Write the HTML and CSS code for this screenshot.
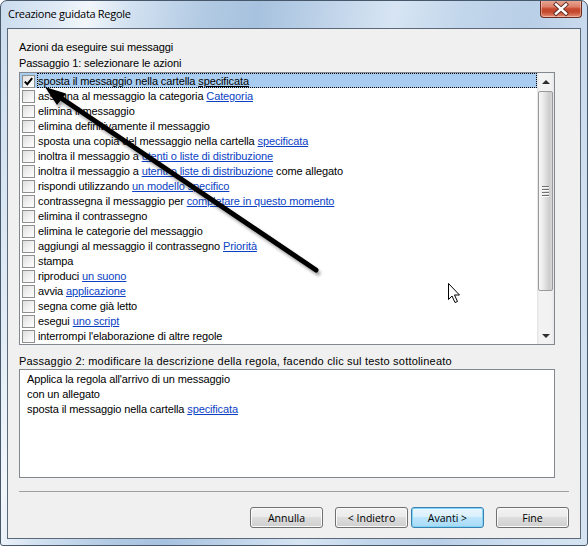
FILE: index.html
```html
<!DOCTYPE html>
<html lang="it">
<head>
<meta charset="utf-8">
<title>Creazione guidata Regole</title>
<link rel="stylesheet" href="styles.css">
</head>
<body>
<div class="window">
  <div class="titlebar">
    <span class="title">Creazione guidata Regole</span>
    <div class="close">
      <svg width="40" height="16" viewBox="0 0 40 16">
        <path d="M15 3.5 L25 12.5 M25 3.5 L15 12.5" stroke="#5a2a22" stroke-width="4.2" stroke-linecap="square" fill="none"/>
        <path d="M15 3.5 L25 12.5 M25 3.5 L15 12.5" stroke="#ffffff" stroke-width="2.4" stroke-linecap="square" fill="none"/>
      </svg>
    </div>
  </div>
  <div class="client">
    <div class="label">Azioni da eseguire sui messaggi</div>
    <div class="label">Passaggio 1: selezionare le azioni</div>
    <div class="listbox">
      <div class="rows">
        <div class="row selected"><span class="cb"><svg width="11" height="11" viewBox="0 0 11 11"><path d="M1.8 5.6 L4.3 8.2 L9.2 2.2" stroke="#000" stroke-width="2" fill="none"/></svg></span><span class="txt">sposta il messaggio nella cartella <u>specificata</u></span></div>
        <div class="row"><span class="cb"></span><span class="txt">assegna al messaggio la categoria <a>Categoria</a></span></div>
        <div class="row"><span class="cb"></span><span class="txt">elimina il messaggio</span></div>
        <div class="row"><span class="cb"></span><span class="txt">elimina definitivamente il messaggio</span></div>
        <div class="row"><span class="cb"></span><span class="txt">sposta una copia del messaggio nella cartella <a>specificata</a></span></div>
        <div class="row"><span class="cb"></span><span class="txt">inoltra il messaggio a <a>utenti o liste di distribuzione</a></span></div>
        <div class="row"><span class="cb"></span><span class="txt">inoltra il messaggio a <a>utenti o liste di distribuzione</a> come allegato</span></div>
        <div class="row"><span class="cb"></span><span class="txt">rispondi utilizzando <a>un modello specifico</a></span></div>
        <div class="row"><span class="cb"></span><span class="txt">contrassegna il messaggio per <a>completare in questo momento</a></span></div>
        <div class="row"><span class="cb"></span><span class="txt">elimina il contrassegno</span></div>
        <div class="row"><span class="cb"></span><span class="txt">elimina le categorie del messaggio</span></div>
        <div class="row"><span class="cb"></span><span class="txt">aggiungi al messaggio il contrassegno <a>Priorità</a></span></div>
        <div class="row"><span class="cb"></span><span class="txt">stampa</span></div>
        <div class="row"><span class="cb"></span><span class="txt">riproduci <a>un suono</a></span></div>
        <div class="row"><span class="cb"></span><span class="txt">avvia <a>applicazione</a></span></div>
        <div class="row"><span class="cb"></span><span class="txt">segna come già letto</span></div>
        <div class="row"><span class="cb"></span><span class="txt">esegui <a>uno script</a></span></div>
        <div class="row"><span class="cb"></span><span class="txt">interrompi l'elaborazione di altre regole</span></div>
      </div>
      <div class="scrollbar">
        <div class="sb-btn"><span class="tri-up"></span></div>
        <div class="sb-thumb"><div class="grip"><i></i><i></i><i></i><i></i></div></div>
        <div class="sb-track"></div>
        <div class="sb-btn"><span class="tri-down"></span></div>
      </div>
    </div>
    <div class="label label2">Passaggio 2: modificare la descrizione della regola, facendo clic sul testo sottolineato</div>
    <div class="desc">
      <div>Applica la regola all'arrivo di un messaggio</div>
      <div>con un allegato</div>
      <div>sposta il messaggio nella cartella <a>specificata</a></div>
    </div>
    <div class="sep"></div>
    <div class="buttons">
      <div class="btn">Annulla</div>
      <div class="btn">&lt; Indietro</div>
      <div class="btn default">Avanti &gt;</div>
      <div class="btn">Fine</div>
    </div>
  </div>
  <svg class="overlay" width="588" height="546" viewBox="0 0 588 546">
    <defs>
      <filter id="shadow" x="-10%" y="-10%" width="130%" height="130%">
        <feDropShadow dx="2" dy="3" stdDeviation="1.6" flood-color="#000" flood-opacity="0.35"/>
      </filter>
    </defs>
    <g filter="url(#shadow)">
      <line x1="316" y1="270" x2="58" y2="96" stroke="#000" stroke-width="5" stroke-linecap="round"/>
      <polygon points="45,87 66,93.5 57,105" fill="#000"/>
    </g>
    <path d="M448.5 283.5 L448.5 299.5 L452 296 L455 302.5 L457.5 301.5 L454.5 295 L459.5 295 Z" fill="#fff" stroke="#000" stroke-width="1" stroke-linejoin="miter"/>
  </svg>
</div>
</body>
</html>
```
FILE: styles.css
```css
html, body {
  margin: 0;
  padding: 0;
}
body {
  width: 588px;
  height: 546px;
  overflow: hidden;
  background: #ffffff;
  font-family: "Liberation Sans", Arial, sans-serif;
  font-size: 11px;
  letter-spacing: -0.12px;
  color: #000;
}
.window {
  position: relative;
  width: 588px;
  height: 546px;
  box-sizing: border-box;
  border: 1px solid #47586b;
  border-radius: 7px 7px 3px 3px;
  overflow: hidden;
  display: flex;
  flex-direction: column;
  background: linear-gradient(100deg, #cbdcee 0%, #dfeaf5 8%, #f1f6fb 13%, #d3e2f1 19%, #b2cae3 30%, #a7c2df 38%, #bfd3e9 48%, #d7e5f3 58%, #c2d6eb 68%, #b9cfe7 78%, #cfdff0 90%, #d6e4f2 100%);
}
.titlebar {
  height: 27px;
  flex: none;
  display: flex;
  justify-content: space-between;
  align-items: flex-start;
  padding: 0 5px 0 7px;
}
.title {
  font-family: "Open Sans", "Noto Sans", sans-serif;
  font-size: 11px;
  letter-spacing: -0.3px;
  line-height: 16px;
  padding-top: 5px;
  color: #000;
}
.close {
  width: 42px;
  height: 18px;
  margin-top: -1px;
  box-sizing: border-box;
  border: 1px solid #6b2c22;
  border-top: none;
  border-radius: 0 0 4px 4px;
  background: linear-gradient(#e9ab99 0%, #dc8068 40%, #c74a30 52%, #c3472d 70%, #d9755a 90%, #e79b82 100%);
  box-shadow: inset 0 0 0 1px rgba(255, 220, 210, 0.45);
  display: flex;
  align-items: center;
  justify-content: center;
}
.client {
  margin: 0 6px;
  height: 511px;
  flex: none;
  box-sizing: border-box;
  border: 1px solid #5a6878;
  background: #f0f0f0;
  padding: 10px 11px 0 11px;
}
.label {
  height: 16px;
  line-height: 16px;
  white-space: nowrap;
}
.listbox {
  margin-top: 1px;
  width: 536px;
  height: 273px;
  box-sizing: border-box;
  border: 1px solid #828790;
  background: #fff;
  display: flex;
}
.rows {
  flex: 1;
  overflow: hidden;
}
.row {
  height: 15px;
  display: flex;
  align-items: flex-start;
  padding-left: 2px;
  white-space: nowrap;
}
.row.selected {
  background: #a9cdf1;
}
.cb {
  width: 13px;
  height: 13px;
  margin-top: 2px;
  box-sizing: border-box;
  border: 1px solid #8e8f8f;
  background: linear-gradient(135deg, #dedede 0%, #f4f4f4 60%, #ffffff 100%);
  flex: none;
  display: flex;
  align-items: center;
  justify-content: center;
}
.txt {
  margin-left: 2px;
  padding-left: 1px;
  line-height: 16px;
  height: 15px;
}
.row.selected .txt {
  flex: 1;
  outline: 1px dotted #000;
  outline-offset: -1px;
}
a {
  color: #0b3fc4;
  text-decoration: underline;
}
u {
  text-decoration: underline;
}
.scrollbar {
  width: 17px;
  flex: none;
  display: flex;
  flex-direction: column;
  background: linear-gradient(90deg, #e4e4e4 0%, #f3f3f3 15%, #f1f1f1 85%, #e6e6e6 100%);
}
.sb-btn {
  height: 17px;
  flex: none;
  display: flex;
  align-items: center;
  justify-content: center;
}
.tri-up {
  width: 0;
  height: 0;
  border-left: 4px solid transparent;
  border-right: 4px solid transparent;
  border-bottom: 4px solid #2e2e2e;
}
.tri-down {
  width: 0;
  height: 0;
  border-left: 4px solid transparent;
  border-right: 4px solid transparent;
  border-top: 4px solid #2e2e2e;
}
.sb-thumb {
  margin: 1px 1px 0 1px;
  height: 200px;
  flex: none;
  box-sizing: border-box;
  border: 1px solid #9a9a9a;
  border-radius: 2px;
  background: linear-gradient(90deg, #f7f7f7 0%, #ececec 30%, #dcdcdc 55%, #cdcdcd 80%, #d7d7d7 100%);
  display: flex;
  align-items: center;
  justify-content: center;
}
.grip {
  display: flex;
  flex-direction: column;
  gap: 1px;
}
.grip i {
  display: block;
  width: 7px;
  height: 1px;
  background: #6f6f6f;
  border-bottom: 1px solid #fafafa;
}
.sb-track {
  flex: 1;
}
.label2 {
  margin-top: 9px;
  height: 15px;
  line-height: 15px;
  letter-spacing: 0.2px;
}
.desc {
  width: 536px;
  height: 109px;
  box-sizing: border-box;
  border: 1px solid #828790;
  background: #fff;
  padding: 2px 7px;
  line-height: 15px;
}
.sep {
  margin-top: 13px;
  height: 0;
  border-top: 1px solid #a0a0a0;
}
.buttons {
  margin-top: 15px;
  display: flex;
  justify-content: flex-end;
}
.btn {
  width: 73px;
  height: 21px;
  box-sizing: border-box;
  border: 1px solid #707070;
  border-radius: 3px;
  background: linear-gradient(#f2f2f2 0%, #ebebeb 45%, #dddddd 50%, #cfcfcf 100%);
  box-shadow: inset 0 0 0 1px #fbfbfb;
  font-family: "Open Sans", "Noto Sans", sans-serif;
  font-size: 10.5px;
  letter-spacing: 0;
  display: flex;
  align-items: center;
  justify-content: center;
  margin-left: 12px;
}
.btn.default {
  margin-left: 3px;
  border-color: #3c7fb1;
  background: linear-gradient(#eaf6fd 0%, #d9f0fc 45%, #bee6fd 50%, #a7d9f5 100%);
  box-shadow: inset 0 0 0 1px #7fd6f7;
}
.overlay {
  position: absolute;
  left: -1px;
  top: -1px;
  pointer-events: none;
}
```
